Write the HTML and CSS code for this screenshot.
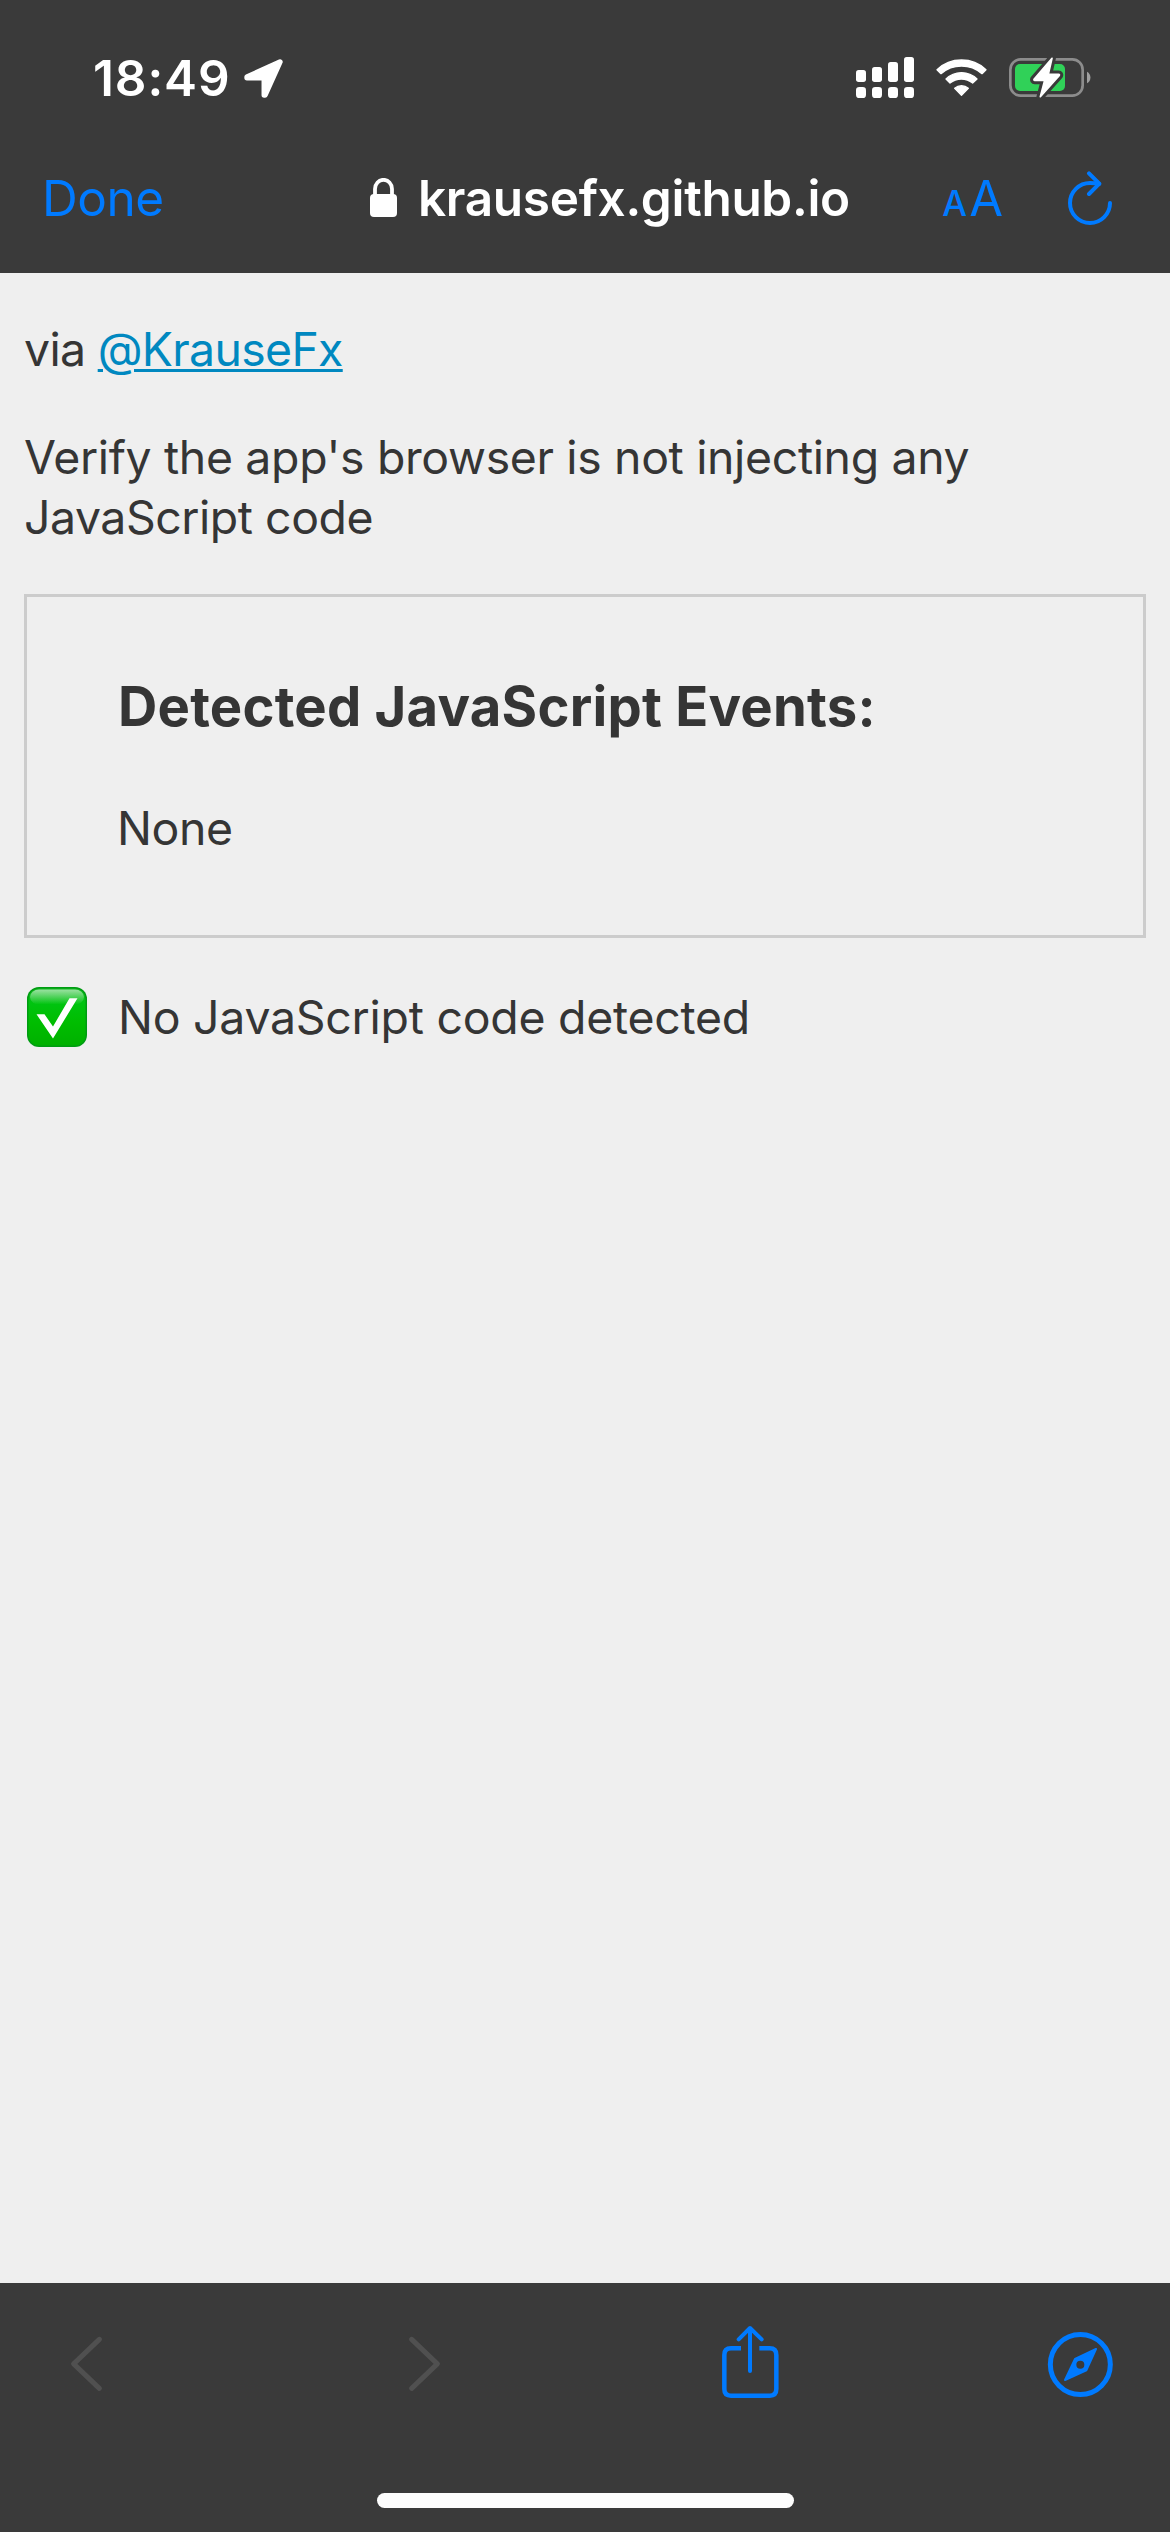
FILE: index.html
```html
<!DOCTYPE html>
<html lang="en">
<head>
<meta charset="utf-8">
<title>krausefx.github.io</title>
<link rel="stylesheet" href="styles.css">
</head>
<body>
<div class="screen">
  <header class="top">
    <div class="status-bar">
      <span class="time">18:49</span>
      <svg class="location" viewBox="732 86 118 118" width="39" height="39"><path fill="#fff" stroke="#fff" stroke-width="16" stroke-linejoin="round" d="M841 95 L741 140 L741 143 H793 V195 L796 195 Z"/></svg>
      <svg class="signal" viewBox="78 81 174 126" width="58" height="42" fill="#fff">
        <rect x="78" y="120" width="30" height="36" rx="8"/><rect x="126" y="111" width="30" height="45" rx="8"/><rect x="174" y="96" width="30" height="60" rx="8"/><rect x="222" y="81" width="30" height="75" rx="8"/>
        <rect x="78" y="171" width="30" height="33" rx="10"/><rect x="126" y="171" width="30" height="33" rx="10"/><rect x="174" y="171" width="30" height="33" rx="10"/><rect x="222" y="171" width="30" height="33" rx="10"/>
      </svg>
      <svg class="wifi" viewBox="318 81 153 126" width="51" height="42" fill="#fff" stroke="#fff" stroke-width="4" stroke-linejoin="round">
        <path d="M321 119 A106 104 0 0 1 468 119 L456 131 A94 94 0 0 0 333 131 Z"/>
        <path d="M348 147 A66 66 0 0 1 441 147 L428 159 A54 54 0 0 0 360 159 Z"/>
        <path d="M374 175 A31 31 0 0 1 415 175 L394.500 196 Z"/>
      </svg>
      <svg class="battery" viewBox="537 81 246 126" width="82" height="42">
        <rect x="541" y="88" width="217" height="109" rx="31" fill="none" stroke="#8c8c8c" stroke-width="8"/>
        <path d="M771 125 A20 20 0 0 1 771 160 Z" fill="#a0a0a0"/>
        <rect x="555" y="102" width="150" height="81" rx="15" fill="#30d158"/>
        <path d="M666 85 L612 148 Q611 151 614 151 H644 L631 200 L688 136 Q689 133 686 133 H655 Z" fill="#3a3a3a" stroke="#3a3a3a" stroke-width="23" stroke-linejoin="round"/>
        <path d="M666 85 L612 148 Q611 151 614 151 H644 L631 200 L688 136 Q689 133 686 133 H655 Z" fill="#fff" stroke="#fff" stroke-width="5" stroke-linejoin="round"/>
      </svg>
    </div>
    <nav class="nav-bar">
      <span class="done">Done</span>
      <svg class="lock" viewBox="0 0 27 40" width="27" height="40"><rect y="16" width="27" height="23" rx="4" fill="#fff"/><path d="M5 18 V11 A8.500 9.200 0 0 1 22 11 V18" fill="none" stroke="#fff" stroke-width="3.800"/></svg>
      <span class="host">krausefx.github.io</span>
      <span class="text-size"><span class="small-a">A</span><span class="large-a">A</span></span>
      <svg class="reload" viewBox="714 423 132 162" width="44" height="54" fill="none" stroke="#007aff" stroke-width="12" stroke-linecap="round" stroke-linejoin="round"><path d="M840 519 A60 60 0 1 1 780 459 Q793 459 807 462"/><path d="M777 430 L808 461 L777 492"/></svg>
    </nav>
  </header>

  <main class="page">
    <p class="via">via <a class="link" href="#">@KrauseFx</a></p>
    <p class="intro"><span class="line-one">Verify the app's browser is not injecting any</span> <span class="line-two">JavaScript code</span></p>
    <section class="events">
      <h3 class="events-title">Detected JavaScript Events:</h3>
      <p class="events-none">None</p>
    </section>
    <div class="result">
      <svg class="check" viewBox="0 0 60 60" width="60" height="60">
        <defs>
          <linearGradient id="green" x1="0" y1="0" x2="0" y2="1"><stop offset="0" stop-color="#10b820"/><stop offset=".25" stop-color="#00c410"/><stop offset=".6" stop-color="#00bd00"/><stop offset="1" stop-color="#00b000"/></linearGradient>
          <linearGradient id="shine" x1="0" y1="0" x2="0" y2="1"><stop offset="0" stop-color="#fff" stop-opacity=".58"/><stop offset="1" stop-color="#fff" stop-opacity="0"/></linearGradient>
        </defs>
        <rect width="60" height="60" rx="12" fill="#009c12"/>
        <rect x="1.500" y="1.500" width="57" height="57" rx="10.500" fill="url(#green)"/>
        <rect x="3" y="2.500" width="54" height="15" rx="9" fill="url(#shine)"/>
        <path fill="#fff" d="M9.500 27.300 H17.500 L26 39.500 L42.500 11.300 H50.500 L26 51.500 Z"/>
      </svg>
      <span class="result-text">No JavaScript code detected</span>
    </div>
  </main>

  <footer class="bottom">
    <div class="toolbar">
      <svg class="back" viewBox="213 192 93 240" width="31" height="80" fill="none" stroke="#505050" stroke-width="15" stroke-linecap="round" stroke-linejoin="round"><path d="M298 238 L221 311.500 L298 385"/></svg>
      <svg class="forward" viewBox="1227 192 93 240" width="31" height="80" fill="none" stroke="#505050" stroke-width="15" stroke-linecap="round" stroke-linejoin="round"><path d="M1235 238 L1312 311.500 L1235 385"/></svg>
      <svg class="share" viewBox="186 192 171 240" width="57" height="80" fill="none" stroke="#007aff" stroke-width="13.500"><path d="M243 265 H213 Q193 265 193 285 V387 Q193 407 213 407 H329 Q349 407 349 387 V285 Q349 265 329 265 H298"/><path d="M270 206 V333 M236 238 L270 204 L305 238" stroke-width="12" stroke-linecap="round" stroke-linejoin="round"/></svg>
      <svg class="compass" viewBox="1161 192 201 240" width="67" height="80"><circle cx="1261" cy="313.500" r="90" fill="none" stroke="#007aff" stroke-width="15"/><path fill="#007aff" fill-rule="evenodd" stroke="#007aff" stroke-width="6" stroke-linejoin="round" d="M1308 267 L1245 297 L1215 360 L1279 331 Z M1246 314 A15 15 0 1 0 1276 314 A15 15 0 1 0 1246 314 Z"/></svg>
    </div>
    <div class="home-indicator"></div>
  </footer>
</div>
</body>
</html>
```
FILE: styles.css
```css
* { box-sizing: border-box; }

body {
  margin: 0;
  font-family: Inter, "Liberation Sans", sans-serif;
  background: #3a3a3a;
}

p, h3 { margin: 0; }
svg { display: block; flex: none; }
span { white-space: nowrap; }

.screen {
  display: flex;
  flex-direction: column;
  width: 1170px;
  height: 2532px;
  background: #efefef;
}

.top {
  height: 273px;
  background: #3a3a3a;
  color: #fff;
}

.status-bar {
  display: flex;
  align-items: center;
  height: 156px;
  padding: 0 79px 0 93px;
}

.time {
  font-size: 49.5px;
  font-weight: 600;
  line-height: 60px;
  letter-spacing: 0.9px;
  width: 151px;
}

.signal { margin-left: auto; }
.wifi { margin-left: 22px; }
.battery { margin-left: 22px; }

.nav-bar {
  display: flex;
  align-items: center;
  height: 84px;
  padding: 0 58px 0 42px;
  font-size: 49.5px;
  line-height: 60px;
}

.done {
  width: 328px;
  color: #007aff;
  letter-spacing: -0.45px;
}

.host {
  margin-left: 21px;
  font-weight: 600;
  letter-spacing: -0.32px;
}

.text-size {
  display: flex;
  align-items: baseline;
  gap: 2px;
  margin-left: auto;
  padding-top: 1px;
  color: #007aff;
}

.small-a {
  font-size: 35px;
  font-weight: 500;
  line-height: 36px;
}

.large-a { font-size: 49px; }
.reload { margin-left: 65px; }

.page {
  flex: 1;
  padding: 46px 24px 0;
  color: #353535;
  font-size: 46.4px;
  line-height: 60px;
}

.via { letter-spacing: -0.68px; }

.link {
  color: #0088c0;
  text-decoration-thickness: 3px;
  text-underline-offset: 3px;
}

.intro {
  display: flex;
  flex-direction: column;
  margin-top: 48px;
}

.line-one { letter-spacing: -0.34px; }
.line-two { letter-spacing: -0.45px; }

.events {
  height: 344px;
  margin-top: 47px;
  padding: 76px 91px;
  border: 3px solid #ccc;
}

.events-title {
  font-size: 54.4px;
  font-weight: 700;
  line-height: 66px;
  letter-spacing: 0.234px;
}

.events-none {
  margin: 59px 0 0 -1px;
  letter-spacing: -0.39px;
}

.result {
  display: flex;
  align-items: center;
  gap: 31px;
  margin-top: 49px;
  padding-left: 3px;
}

.result-text { letter-spacing: -0.246px; }

.bottom {
  display: flex;
  flex-direction: column;
  height: 249px;
  padding-top: 41px;
  background: #3a3a3a;
}

.toolbar {
  display: flex;
  padding-left: 71px;
}

.forward { margin-left: 307px; }
.share { margin-left: 282px; }
.compass { margin-left: 268px; }

.home-indicator {
  width: 417px;
  height: 15px;
  margin: 89px 0 0 377px;
  border-radius: 8px;
  background: #fdfdfd;
}
```
